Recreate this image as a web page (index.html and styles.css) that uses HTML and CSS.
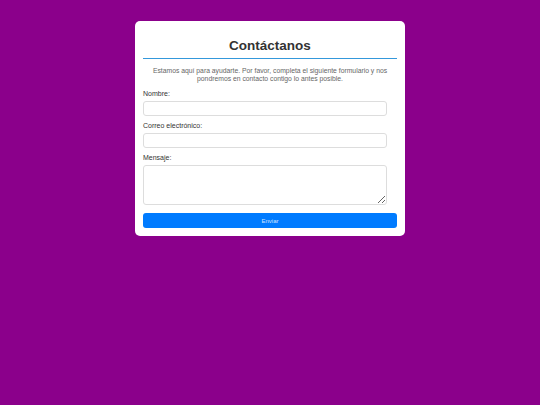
FILE: index.html
```html
<!DOCTYPE html>
<html lang="es">
<head>
<meta charset="utf-8">
<title>Contáctanos</title>
<link rel="stylesheet" href="styles.css">
</head>
<body>
<div class="card">
  <h1 class="title">Contáctanos</h1>
  <p class="intro">Estamos aquí para ayudarte. Por favor, completa el siguiente formulario y nos pondremos en contacto contigo lo antes posible.</p>
  <form class="form">
    <label class="label" for="nombre">Nombre:</label>
    <input class="field" id="nombre" type="text">
    <label class="label" for="correo">Correo electrónico:</label>
    <input class="field" id="correo" type="email">
    <label class="label" for="mensaje">Mensaje:</label>
    <textarea class="field area" id="mensaje"></textarea>
    <button class="submit" type="button">Enviar</button>
  </form>
</div>
</body>
</html>
```
FILE: styles.css
```css
html, body {
  margin: 0;
  padding: 0;
}
body {
  background: #8b008b;
  font-family: "Liberation Sans", Arial, sans-serif;
  width: 540px;
  height: 405px;
  padding-top: 21px;
  box-sizing: border-box;
}
.card {
  width: 270px;
  margin: 0 auto;
  background: #fff;
  border-radius: 5px;
  padding: 8px;
  box-sizing: border-box;
}
.title {
  margin: 9px 0 0;
  font-size: 13.5px;
  line-height: 16px;
  font-weight: bold;
  color: #333;
  text-align: center;
  padding-bottom: 4px;
  border-bottom: 1px solid #3498db;
}
.intro {
  margin: 8px 0 0;
  font-size: 6.8px;
  line-height: 8px;
  color: #666;
  text-align: center;
}
.form {
  display: flex;
  flex-direction: column;
  margin-top: 7px;
}
.label {
  display: block;
  font-size: 7px;
  line-height: 8px;
  color: #333;
  margin-bottom: 3px;
}
.field {
  display: block;
  width: 244px;
  height: 15px;
  box-sizing: border-box;
  border: 1px solid #ddd;
  border-radius: 3px;
  padding: 2px 4px;
  margin: 0 0 6px;
  font-size: 7px;
  background: #fff;
}
.area {
  height: 40px;
  margin-bottom: 8px;
}
.submit {
  display: block;
  width: 254px;
  height: 15px;
  border: none;
  border-radius: 3px;
  background: #007bff;
  color: #cfe4ff;
  font-family: "Liberation Sans", Arial, sans-serif;
  font-size: 6px;
  padding: 0;
}
```
